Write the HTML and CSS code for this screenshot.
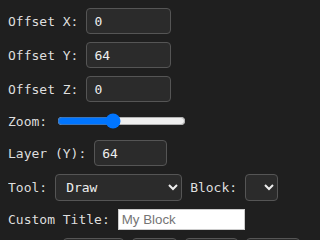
FILE: index.html
```html
<!DOCTYPE html>
<html lang="en">
<head>
  <meta charset="UTF-8" />
  <title>Block Editor</title>
  <link rel="stylesheet" href="styles.css">
</head>
<body>
  <div class="panel">
    <div class="row">
      <label for="ox">Offset X:</label>
      <input id="ox" class="field" value="0" />
    </div>
    <div class="row">
      <label for="oy">Offset Y:</label>
      <input id="oy" class="field" value="64" />
    </div>
    <div class="row">
      <label for="oz">Offset Z:</label>
      <input id="oz" class="field" value="0" />
    </div>
    <div class="row zoom-row">
      <label for="zoom">Zoom:</label>
      <input id="zoom" type="range" min="0" max="100" value="42" />
    </div>
    <div class="row">
      <label for="layer">Layer (Y):</label>
      <input id="layer" class="field small" value="64" />
    </div>
    <div class="row">
      <label for="tool">Tool:</label>
      <select id="tool" class="pick wide">
        <option>Draw</option>
        <option>Erase</option>
        <option>Fill</option>
      </select>
      <label for="block">Block:</label>
      <select id="block" class="pick"></select>
    </div>
    <div class="row">
      <label for="title">Custom Title:</label>
      <input id="title" class="plain" placeholder="My Block" />
    </div>
    <div class="row">
      <label>World:</label>
      <button>Export</button>
      <button>Save</button>
      <button>Clear</button>
      <button>Reset</button>
    </div>
  </div>
</body>
</html>
```

FILE: styles.css
```css
body {
  margin: 8px;
  background: #1f1f1f;
  color: #dedede;
  font-family: 'DejaVu Sans Mono', monospace;
  font-size: 13px;
}

.row {
  display: flex;
  align-items: center;
  gap: 8px;
  margin-bottom: 8px;
}

.zoom-row {
  min-height: 22px;
}

.field, .pick, button {
  font-family: 'DejaVu Sans Mono', monospace;
  font-size: 13px;
  background: #2b2b2b;
  color: #eee;
  border: 1px solid #555;
  border-radius: 4px;
  box-sizing: border-box;
}

.field {
  width: 85px;
  height: 26px;
  padding: 0 7px;
}

.field.small {
  width: 73px;
}

.pick {
  height: 27px;
  width: 33px;
  padding: 0 4px;
}

.pick.wide {
  width: 127px;
  padding: 0 6px;
}

.plain {
  width: 127px;
  height: 21px;
  box-sizing: border-box;
  border: 1px solid #ccc;
  padding: 1px 3px;
  font-family: 'Liberation Sans', sans-serif;
  font-size: 13.3px;
}

button {
  padding: 4px 6px;
  cursor: pointer;
}
```
